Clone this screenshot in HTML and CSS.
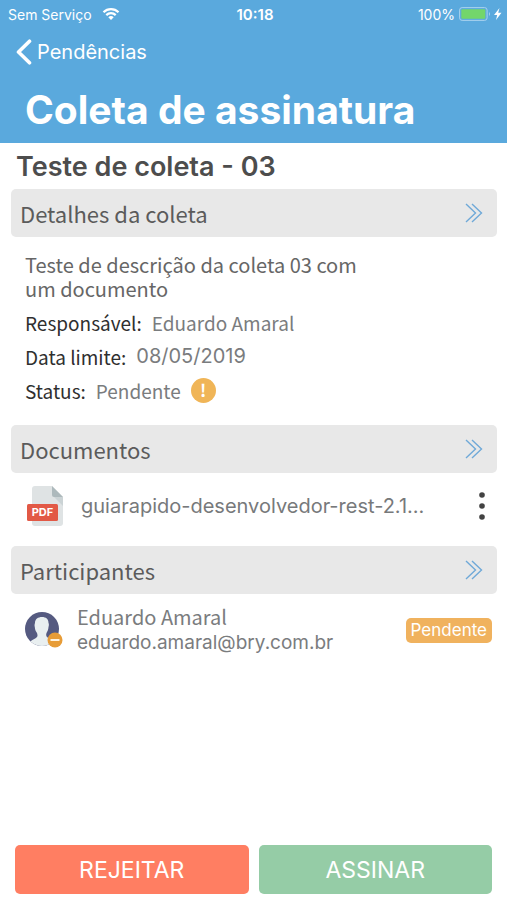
FILE: index.html
```html
<!DOCTYPE html>
<html lang="pt-BR">
<head>
    <meta charset="UTF-8">
    <meta name="viewport" content="width=device-width, initial-scale=1.0">
    <title>Coleta de assinatura</title>
    <link rel="stylesheet" href="styles.css">
</head>
<body>
    <header class="header">
        <div class="status-bar">
            <div class="carrier">
                <span>Sem Serviço</span>
                <svg width="18" height="14" viewBox="0 0 18 14" fill="none" stroke="#fff" stroke-width="2.2">
                    <path d="M1.5 5.2a10.6 10.6 0 0 1 15 0M4.3 8.1a6.7 6.7 0 0 1 9.4 0"/>
                    <path d="M9 13L6.3 10.3a3.8 3.8 0 0 1 5.4 0z" fill="#fff" stroke="none"/>
                </svg>
            </div>
            <span class="clock">10:18</span>
            <div class="battery">
                <span>100%</span>
                <svg width="43" height="14" viewBox="0 0 43 14">
                    <rect x="0.6" y="0.6" width="27.5" height="12.8" rx="2.5" fill="none" stroke="#a9d2ee"/>
                    <rect x="2.3" y="2.3" width="24" height="9.4" rx="1" fill="#73d66b"/>
                    <path d="M30 5v4q2-2 0-4z" fill="#a9d2ee"/>
                    <path d="M40.5 1l-5.5 7h3.2L37 13l5.5-7.2h-3.3z" fill="#fff"/>
                </svg>
            </div>
        </div>
        <a class="back" href="#">
            <svg width="16" height="26" viewBox="0 0 16 26" fill="none" stroke="#fff" stroke-width="3.6" stroke-linecap="round" stroke-linejoin="round">
                <path d="M13.5 2.2L2.5 13l11 10.8"/>
            </svg>
            <span>Pendências</span>
        </a>
        <h1>Coleta de assinatura</h1>
    </header>

    <main class="content">
        <h2>Teste de coleta - 03</h2>

        <section>
            <button class="section-title" type="button">
                <span>Detalhes da coleta</span>
                <svg width="18" height="20" viewBox="0 0 18 20" fill="none" stroke="#6fa9d8" stroke-width="1.4">
                    <path d="M1 1l9.5 9L1 19M7 1l9.5 9L7 19"/>
                </svg>
            </button>
            <div class="details">
                <p class="description">Teste de descrição da coleta 03 com um documento</p>
                <dl>
                    <div class="field">
                        <dt>Responsável:</dt>
                        <dd>Eduardo Amaral</dd>
                    </div>
                    <div class="field">
                        <dt>Data limite:</dt>
                        <dd class="date">08/05/2019</dd>
                    </div>
                    <div class="field">
                        <dt>Status:</dt>
                        <dd>Pendente</dd>
                        <dd class="alert">!</dd>
                    </div>
                </dl>
            </div>
        </section>

        <section>
            <button class="section-title" type="button">
                <span>Documentos</span>
                <svg width="18" height="20" viewBox="0 0 18 20" fill="none" stroke="#6fa9d8" stroke-width="1.4">
                    <path d="M1 1l9.5 9L1 19M7 1l9.5 9L7 19"/>
                </svg>
            </button>
            <div class="document">
                <svg class="pdf" width="36" height="42" viewBox="0 0 36 42">
                    <path d="M8 1h17l11 11v26q0 3-3 3H8q-3 0-3-3V4q0-3 3-3z" fill="#dfe3e4"/>
                    <path d="M27 12h9v9z" fill="#cbd3d5"/>
                    <path d="M25 1l11 11h-9q-2 0-2-2z" fill="#adb9bc"/>
                    <rect x="0" y="19" width="31" height="17" rx="1.5" fill="#e25946"/>
                    <text x="15.5" y="31" text-anchor="middle">PDF</text>
                </svg>
                <span class="file-name">guiarapido-desenvolvedor-rest-2.1...</span>
                <button class="more" type="button" aria-label="Mais opções">
                    <svg width="6" height="28" viewBox="0 0 6 28" fill="#424242">
                        <circle cx="3" cy="3" r="2.8"/>
                        <circle cx="3" cy="14" r="2.8"/>
                        <circle cx="3" cy="25" r="2.8"/>
                    </svg>
                </button>
            </div>
        </section>

        <section>
            <button class="section-title" type="button">
                <span>Participantes</span>
                <svg width="18" height="20" viewBox="0 0 18 20" fill="none" stroke="#6fa9d8" stroke-width="1.4">
                    <path d="M1 1l9.5 9L1 19M7 1l9.5 9L7 19"/>
                </svg>
            </button>
            <div class="participant">
                <svg width="38" height="38" viewBox="0 0 38 38">
                    <circle cx="17" cy="18" r="17" fill="#555a80"/>
                    <path d="M5.500 30.500c1.500-2 5-2.500 6.500-4.500.8-1 .5-2.500 0-4-1.500-2-2-3.500-2.200-6-.5-2-.2-3 .2-4C10 8 13 6 17 6s6.500 2 6.500 6c.5 1 .5 2.500 0 4-.2 2.500-.8 4-2 6-.5 1.500-.5 3 .5 4 2 2 5 2.500 6.500 4.500a17 17 0 0 1-23 0z" fill="#e9eff0"/>
                    <circle cx="30" cy="29" r="7.5" fill="#e79c37"/>
                    <path d="M25.5 29h9" stroke="#fff3df" stroke-width="2"/>
                </svg>
                <div class="person">
                    <span>Eduardo Amaral</span>
                    <span class="email">eduardo.amaral@bry.com.br</span>
                </div>
                <span class="badge">Pendente</span>
            </div>
        </section>
    </main>

    <footer class="actions">
        <button class="reject" type="button">REJEITAR</button>
        <button class="sign" type="button">ASSINAR</button>
    </footer>
</body>
</html>
```
FILE: styles.css
```css
* {
    box-sizing: border-box;
}
body {
    margin: 0;
    min-height: 100vh;
    display: flex;
    flex-direction: column;
    font-family: Inter, "Liberation Sans", sans-serif;
    background-color: #fff;
}
h1, h2, p, dl, dd {
    margin: 0;
}
svg {
    display: block;
    flex-shrink: 0;
}
button {
    border: none;
    padding: 0;
    font-family: inherit;
    cursor: pointer;
}
.header {
    background-color: #5aa9dd;
    color: #fff;
    padding-bottom: 8px;
}
.status-bar {
    display: grid;
    grid-template-columns: 1fr auto 1fr;
    align-items: center;
    height: 28px;
    padding: 0 5px 0 8px;
    font-size: 14px;
}
.carrier, .battery {
    display: flex;
    align-items: center;
    gap: 10px;
}
.battery {
    justify-content: flex-end;
    gap: 4px;
}
.clock {
    font-size: 15px;
    font-weight: 600;
}
.back {
    display: flex;
    align-items: center;
    gap: 5px;
    width: fit-content;
    height: 48px;
    padding-left: 16px;
    color: #fff;
    font-size: 20px;
    text-decoration: none;
}
h1 {
    padding: 8px 25px 0;
    font-size: 39px;
    line-height: 51px;
    font-weight: 700;
}
.content {
    flex: 1;
    padding: 8px 10px 0 11px;
}
h2 {
    padding-left: 5px;
    margin-bottom: 6px;
    font-size: 27px;
    line-height: 32px;
    font-weight: 600;
    color: #4d4d4d;
}
.section-title {
    display: flex;
    align-items: center;
    justify-content: space-between;
    width: 100%;
    height: 48px;
    padding: 0 14px 0 9px;
    border-radius: 5px;
    background-color: #e8e8e8;
    color: #5b5b5b;
    font-family: "Noto Sans CJK JP", sans-serif;
    font-size: 22px;
}
.details {
    padding: 16px 14px 18px;
    font-family: "Noto Sans CJK JP", sans-serif;
    font-size: 19px;
}
.description {
    max-width: 350px;
    margin-bottom: 4px;
    font-size: 20px;
    line-height: 24px;
    color: #666;
}
.field {
    display: flex;
    align-items: center;
    gap: 10px;
    height: 34px;
}
.field dt {
    color: #2f2f2f;
}
.field dd {
    color: #7a7c7e;
}
.field .date {
    font-family: Inter, sans-serif;
    font-size: 20px;
}
.field .alert {
    width: 25px;
    height: 25px;
    border-radius: 50%;
    background-color: #f0b557;
    color: #fff;
    font-size: 17px;
    line-height: 24px;
    font-weight: 600;
    text-align: center;
}
.document {
    display: flex;
    align-items: center;
    height: 73px;
    padding: 0 12px 8px 16px;
}
.pdf text {
    font-size: 11px;
    font-weight: 700;
    fill: #fff;
}
.file-name {
    flex: 1;
    min-width: 0;
    margin-left: 18px;
    font-size: 20px;
    color: #77797b;
    white-space: nowrap;
    overflow: hidden;
    text-overflow: ellipsis;
}
.more {
    background: none;
}
.participant {
    display: flex;
    align-items: center;
    padding: 10px 5px 0 14px;
}
.person {
    flex: 1;
    display: flex;
    flex-direction: column;
    margin-left: 14px;
    font-family: "Noto Sans CJK JP", sans-serif;
    font-size: 20px;
    line-height: 26px;
    color: #7a7c7e;
}
.email {
    font-family: Inter, sans-serif;
    font-size: 19px;
}
.badge {
    padding: 0 5px;
    border-radius: 5px;
    background-color: #f0b25e;
    color: #fff;
    font-size: 17px;
    line-height: 25px;
}
.actions {
    display: flex;
    gap: 10px;
    padding: 0 15px 6px;
}
.actions button {
    flex: 1;
    height: 49px;
    border-radius: 5px;
    color: #fff;
    font-size: 23px;
}
.reject {
    background-color: #ff7e62;
}
.sign {
    background-color: #95cca6;
}
```
